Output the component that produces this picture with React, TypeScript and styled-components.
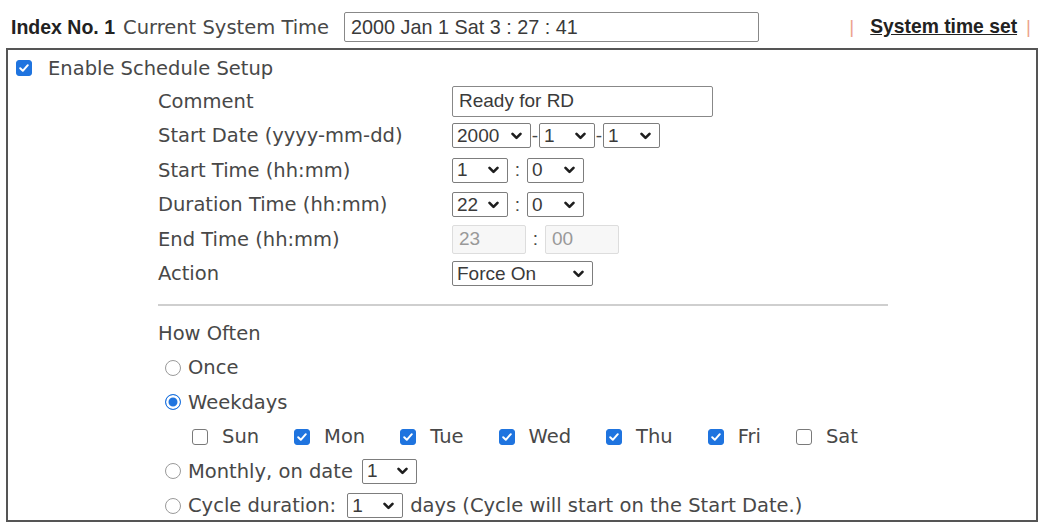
import React from "react";
import styled, { createGlobalStyle } from "styled-components";

const GlobalStyle = createGlobalStyle`
  body {
    margin: 0;
    background: #ffffff;
    font-family: "DejaVu Sans", Verdana, sans-serif;
    color: #484848;
  }
  * { box-sizing: border-box; }
`;

const Page = styled.div`
  width: 1043px;
  height: 529px;
  background: #fff;
  font-size: 19.5px;
`;

const TopBar = styled.div`
  display: flex;
  align-items: center;
  height: 48px;
  padding: 6px 0 0 11px;
`;

const IndexLabel = styled.span`
  font-family: "Liberation Sans", Arial, sans-serif;
  font-weight: bold;
  font-size: 19.5px;
  color: #222;
  margin-right: 8px;
`;

const PlainLabel = styled.span`
  font-size: 19.5px;
  color: #484848;
  white-space: nowrap;
`;

const TextBox = styled.div<{ w: number; h?: number; disabled?: boolean }>`
  display: flex;
  align-items: center;
  width: ${({ w }) => w}px;
  height: ${({ h }) => h ?? 29}px;
  padding-left: 6px;
  border: 1px solid ${({ disabled }) => (disabled ? "#ddd" : "#888")};
  border-radius: 2px;
  background: ${({ disabled }) => (disabled ? "#f7f7f7" : "#fff")};
  color: ${({ disabled }) => (disabled ? "#999" : "#3a3a3a")};
  font-family: "Liberation Sans", Arial, sans-serif;
  font-size: 19px;
  white-space: nowrap;
`;

const TimeBox = styled(TextBox)`
  margin-left: 15px;
  height: 30px;
  width: 415px;
  font-size: 19.8px;
`;

const LinkGroup = styled.div`
  margin-left: auto;
  margin-right: 12px;
  display: flex;
  align-items: center;
  font-family: "Liberation Sans", Arial, sans-serif;
`;

const Pipe = styled.span`
  color: #eca48e;
  font-size: 19px;
`;

const TimeLink = styled.a`
  font-weight: bold;
  font-size: 19.3px;
  color: #222;
  text-decoration: underline;
  margin: 0 9px 0 16px;
`;

const Panel = styled.div`
  margin-left: 6px;
  width: 1032px;
  height: 474px;
  border: 2px solid #555;
`;

const EnableRow = styled.div`
  display: flex;
  align-items: center;
  gap: 16px;
  height: 34px;
  padding: 2px 0 0 8px;
`;

const FormGrid = styled.div`
  display: grid;
  grid-template-columns: 294px auto;
  grid-auto-rows: 34.5px;
  align-items: center;
  margin-left: 150px;
`;

const Label = styled.div`
  white-space: nowrap;
`;

const Fields = styled.div`
  display: flex;
  align-items: center;
`;

const Sep = styled.span<{ w: number }>`
  width: ${({ w }) => w}px;
  text-align: center;
  font-family: "Liberation Sans", Arial, sans-serif;
  font-size: 19px;
  color: #484848;
`;

const Divider = styled.div`
  margin: 13px 0 0 150px;
  width: 730px;
  height: 2px;
  background: #cfcfcf;
`;

const Often = styled.div`
  margin: 10px 0 0 150px;
  display: flex;
  flex-direction: column;
`;

const OptRow = styled.div<{ indent?: number }>`
  display: flex;
  align-items: center;
  height: 34.5px;
  padding-left: ${({ indent }) => indent ?? 0}px;
  white-space: nowrap;
`;

const Gap = styled.span<{ w: number }>`
  display: inline-block;
  width: ${({ w }) => w}px;
`;

const DayItem = styled.span`
  display: flex;
  align-items: center;
  gap: 14px;
  margin-right: 35px;
`;

const Box = styled.span<{ on?: boolean }>`
  display: inline-flex;
  align-items: center;
  justify-content: center;
  width: 16px;
  height: 16px;
  border-radius: 3px;
  flex-shrink: 0;
  border: 1px solid ${({ on }) => (on ? "#1f74df" : "#7a7a7a")};
  background: ${({ on }) => (on ? "#1f74df" : "#fff")};
`;

const Radio = styled.span<{ on?: boolean }>`
  display: inline-block;
  width: 16px;
  height: 16px;
  border-radius: 50%;
  margin-right: 7px;
  flex-shrink: 0;
  border: 1px solid ${({ on }) => (on ? "#1f74df" : "#9a9a9a")};
  background: ${({ on }) => (on ? "#1f74df" : "#fff")};
  box-shadow: ${({ on }) => (on ? "inset 0 0 0 2.5px #fff" : "none")};
`;

const SelectBox = styled.div<{ w: number }>`
  display: inline-flex;
  align-items: center;
  justify-content: space-between;
  width: ${({ w }) => w}px;
  height: 25px;
  padding: 0 8px 0 4px;
  border: 1px solid #7d7d7d;
  border-radius: 2px;
  background: #fff;
  font-family: "Liberation Sans", Arial, sans-serif;
  font-size: 19px;
  color: #3a3a3a;
  white-space: nowrap;
`;

const Check = () => (
  <svg width="12" height="12" viewBox="0 0 12 12">
    <path d="M2.2 6.3 L4.8 8.8 L9.8 3.2" stroke="#fff" strokeWidth="2" fill="none" strokeLinecap="round" strokeLinejoin="round" />
  </svg>
);

const Chevron = () => (
  <svg width="11" height="8" viewBox="0 0 11 8">
    <path d="M1.5 1.8 L5.5 5.8 L9.5 1.8" stroke="#1e1e1e" strokeWidth="2.6" fill="none" strokeLinecap="round" strokeLinejoin="round" />
  </svg>
);

const Select = ({ value, w }: { value: string; w: number }) => (
  <SelectBox w={w}>
    <span>{value}</span>
    <Chevron />
  </SelectBox>
);

const CheckBox = ({ on }: { on?: boolean }) => <Box on={on}>{on && <Check />}</Box>;

const days = [
  { name: "Sun", on: false },
  { name: "Mon", on: true },
  { name: "Tue", on: true },
  { name: "Wed", on: true },
  { name: "Thu", on: true },
  { name: "Fri", on: true },
  { name: "Sat", on: false },
];

export default function App() {
  return (
    <Page>
      <GlobalStyle />
      <TopBar>
        <IndexLabel>Index No. 1</IndexLabel>
        <PlainLabel>Current System Time</PlainLabel>
        <TimeBox w={415}>2000 Jan 1 Sat 3 : 27 : 41</TimeBox>
        <LinkGroup>
          <Pipe>|</Pipe>
          <TimeLink>System time set</TimeLink>
          <Pipe>|</Pipe>
        </LinkGroup>
      </TopBar>

      <Panel>
        <EnableRow>
          <CheckBox on />
          <span>Enable Schedule Setup</span>
        </EnableRow>

        <FormGrid>
          <Label>Comment</Label>
          <Fields>
            <TextBox w={261} h={31}>Ready for RD</TextBox>
          </Fields>

          <Label>Start Date (yyyy-mm-dd)</Label>
          <Fields>
            <Select value="2000" w={79} />
            <Sep w={8}>-</Sep>
            <Select value="1" w={56} />
            <Sep w={8}>-</Sep>
            <Select value="1" w={57} />
          </Fields>

          <Label>Start Time (hh:mm)</Label>
          <Fields>
            <Select value="1" w={56} />
            <Sep w={19}>:</Sep>
            <Select value="0" w={57} />
          </Fields>

          <Label>Duration Time (hh:mm)</Label>
          <Fields>
            <Select value="22" w={56} />
            <Sep w={19}>:</Sep>
            <Select value="0" w={57} />
          </Fields>

          <Label>End Time (hh:mm)</Label>
          <Fields>
            <TextBox w={74} disabled>23</TextBox>
            <Sep w={19}>:</Sep>
            <TextBox w={74} disabled>00</TextBox>
          </Fields>

          <Label>Action</Label>
          <Fields>
            <Select value="Force On" w={141} />
          </Fields>
        </FormGrid>

        <Divider />

        <Often>
          <OptRow>How Often</OptRow>
          <OptRow indent={7}>
            <Radio />
            Once
          </OptRow>
          <OptRow indent={7}>
            <Radio on />
            Weekdays
          </OptRow>
          <OptRow indent={34}>
            {days.map((d) => (
              <DayItem key={d.name}>
                <CheckBox on={d.on} />
                {d.name}
              </DayItem>
            ))}
          </OptRow>
          <OptRow indent={7}>
            <Radio />
            Monthly, on date
            <Gap w={9} />
            <Select value="1" w={55} />
          </OptRow>
          <OptRow indent={7}>
            <Radio />
            Cycle duration:
            <Gap w={11} />
            <Select value="1" w={56} />
            <Gap w={7} />
            days (Cycle will start on the Start Date.)
          </OptRow>
        </Often>
      </Panel>
    </Page>
  );
}
